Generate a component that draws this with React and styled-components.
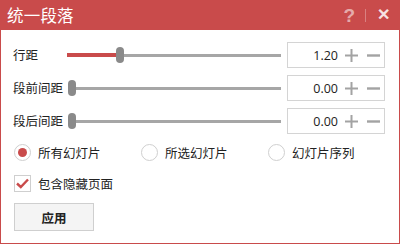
import React from "react";
import styled, { createGlobalStyle } from "styled-components";

const RED = "#c94b4b";
const FONT = `"Noto Sans CJK SC", "Noto Sans", sans-serif`;

const Global = createGlobalStyle`
  html, body { margin: 0; padding: 0; background: #fff; }
  body { font-family: ${FONT}; color: #222; }
`;

const Window = styled.div`
  width: 400px;
  height: 244px;
  box-sizing: border-box;
  border: 1px solid ${RED};
  border-top: none;
  background: #fff;
  display: flex;
  flex-direction: column;
`;

const TitleBar = styled.div`
  height: 30px;
  margin: 0 -1px;
  background: ${RED};
  display: flex;
  align-items: center;
  padding: 0 10px 0 7px;
  color: #fff;
`;

const Title = styled.div`
  flex: 1;
  font-size: 16.5px;
  line-height: 30px;
  letter-spacing: 0.2px;
`;

const TitleBtn = styled.div`
  font-family: "Liberation Sans", sans-serif;
  font-weight: ${(p) => (p.$bold ? 700 : 400)};
  font-size: ${(p) => p.$size}px;
  color: ${(p) => p.$color};
  line-height: 1;
`;

const Divider = styled.div`
  width: 1px;
  height: 13px;
  background: rgba(255, 255, 255, 0.3);
  margin: 0 11px 0 10px;
`;

const Content = styled.div`
  padding: 12px 14px 0 12px;
  display: flex;
  flex-direction: column;
`;

const Rows = styled.div`
  display: flex;
  flex-direction: column;
  gap: 7px;
`;

const Row = styled.div`
  display: grid;
  grid-template-columns: 48px 214px 98px;
  column-gap: 6px;
  align-items: center;
  height: 26px;
`;

const Label = styled.div`
  font-size: 12.5px;
  line-height: 16px;
  white-space: nowrap;
`;

const Slider = styled.div`
  position: relative;
  height: 16px;
`;

const Track = styled.div`
  position: absolute;
  left: 0;
  right: 0;
  top: 7px;
  height: 3px;
  background: #a6a6a6;
`;

const Fill = styled.div`
  position: absolute;
  left: 0;
  top: 6px;
  height: 4px;
  background: ${RED};
`;

const Thumb = styled.div`
  position: absolute;
  top: 0;
  width: 8px;
  height: 16px;
  border-radius: 4px;
  background: #8a8a8a;
`;

const NumBox = styled.div`
  box-sizing: border-box;
  height: 26px;
  border: 1px solid #d4d4d4;
  display: flex;
  align-items: center;
  justify-content: flex-end;
  padding-right: 4px;
`;

const NumText = styled.span`
  font-family: "Open Sans", "Noto Sans", sans-serif;
  font-size: 12.5px;
  color: #222;
  margin-right: 7px;
`;

const Step = styled.svg`
  width: 13px;
  height: 13px;
  margin-left: ${(p) => p.$ml || 0}px;
  display: block;
`;

const RadioRow = styled.div`
  display: grid;
  grid-template-columns: 127px 127px 1fr;
  margin-top: 10px;
  margin-left: 1px;
`;

const Choice = styled.label`
  display: flex;
  align-items: center;
  gap: 7px;
  font-size: 12.5px;
  line-height: 17px;
`;

const RadioDot = styled.span`
  box-sizing: border-box;
  width: 17px;
  height: 17px;
  border-radius: 50%;
  border: 1px solid #cfcfcf;
  display: flex;
  align-items: center;
  justify-content: center;
  &::after {
    content: "";
    width: 9px;
    height: 9px;
    border-radius: 50%;
    background: ${(p) => (p.$on ? RED : "transparent")};
  }
`;

const CheckRow = styled.div`
  margin-top: 14px;
  margin-left: 1px;
`;

const CheckBox = styled.span`
  box-sizing: border-box;
  width: 17px;
  height: 17px;
  border: 1px solid #cfcfcf;
  display: flex;
  align-items: center;
  justify-content: center;
`;

const Button = styled.button`
  margin-top: 11px;
  margin-left: 1px;
  width: 80px;
  height: 28px;
  box-sizing: border-box;
  border: 1px solid #cfcfcf;
  background: #f4f4f4;
  font-family: ${FONT};
  font-size: 12.5px;
  font-weight: 700;
  color: #222;
  padding: 0;
`;

const Plus = () => (
  <Step viewBox="0 0 13 13" $ml={0}>
    <path d="M0 6.5H13M6.5 0V13" stroke="#a3a3a3" strokeWidth="2" />
  </Step>
);
const Minus = () => (
  <Step viewBox="0 0 13 13" $ml={9}>
    <path d="M0 6.5H13" stroke="#a3a3a3" strokeWidth="2.4" />
  </Step>
);

const rows = [
  { label: "行距", value: 1.2, max: 5 },
  { label: "段前间距", value: 0, max: 5 },
  { label: "段后间距", value: 0, max: 5 },
];

function SliderRow({ label, value, max }) {
  const pct = value / max;
  const left = Math.round(pct * (214 - 8));
  return (
    <Row>
      <Label>{label}</Label>
      <Slider>
        <Track style={{ left: left + 8 }} />
        {left > 0 && <Fill style={{ width: left }} />}
        <Thumb style={{ left: left + (left > 0 ? 0 : 1) }} />
      </Slider>
      <NumBox>
        <NumText>{value.toFixed(2)}</NumText>
        <Plus />
        <Minus />
      </NumBox>
    </Row>
  );
}

export default function App() {
  return (
    <>
      <Global />
      <Window>
        <TitleBar>
          <Title>统一段落</Title>
          <TitleBtn $bold $size={19} $color="rgba(255,255,255,0.55)">?</TitleBtn>
          <Divider />
          <TitleBtn $bold $size={16} $color="rgba(255,255,255,0.85)">✕</TitleBtn>
        </TitleBar>
        <Content>
          <Rows>
            {rows.map((r) => (
              <SliderRow key={r.label} {...r} />
            ))}
          </Rows>
          <RadioRow>
            <Choice><RadioDot $on />所有幻灯片</Choice>
            <Choice><RadioDot />所选幻灯片</Choice>
            <Choice><RadioDot />幻灯片序列</Choice>
          </RadioRow>
          <CheckRow>
            <Choice>
              <CheckBox>
                <svg width="13" height="11" viewBox="0 0 13 11">
                  <path d="M1 5.5L4.8 9L12 1.5" fill="none" stroke={RED} strokeWidth="2.4" />
                </svg>
              </CheckBox>
              包含隐藏页面
            </Choice>
          </CheckRow>
          <div>
            <Button>应用</Button>
          </div>
        </Content>
      </Window>
    </>
  );
}
